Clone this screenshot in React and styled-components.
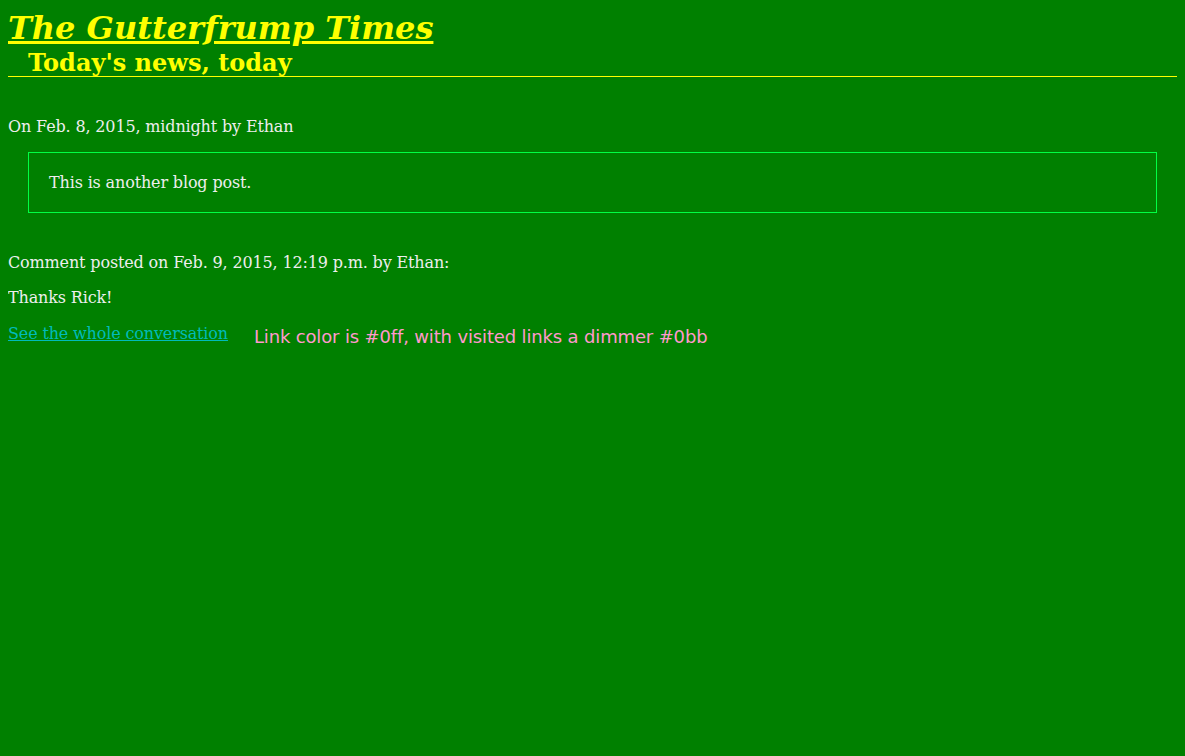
import React from 'react';
import styled, { createGlobalStyle } from 'styled-components';

const Global = createGlobalStyle`
    html, body {
        background: #008000;
    }
    body {
        margin: 8px;
        color: #eee;
        font-family: "DejaVu Serif", serif;
        font-size: 16px;
        line-height: 19px;
        letter-spacing: -0.15px;
    }
`;

const Masthead = styled.header`
    // box
    border-bottom: 1px solid #ff0;
    margin-bottom: 40px;
    letter-spacing: 0;
`;

const Title = styled.h1`
    // font
    color: #ff0;
    font-size: 32px;
    line-height: 38px;
    font-style: italic;
    font-weight: bold;
    // box
    margin: 0;
    padding-top: 1px;
    a {
        color: #ff0;
        text-decoration: underline;
    }
`;

const Tagline = styled.h2`
    // font
    color: #ff0;
    font-size: 24px;
    line-height: 27px;
    font-weight: bold;
    // box
    margin: 0;
    padding: 2px 0 0 20px;
`;

const Line = styled.p`
    margin: 16px 0;
`;

const PostBody = styled.div`
    // box
    margin: 0 20px;
    padding: 20px;
    border: 1px solid #0f4;
`;

const Comments = styled.section`
    margin-top: 40px;
`;

const Link = styled.a`
    color: #0bb;
    text-decoration: underline;
`;

const Note = styled.span`
    // font
    color: #f9c;
    font-family: "DejaVu Sans", sans-serif;
    font-size: 18px;
    // box
    display: inline-block;
    margin-left: 21px;
    position: relative;
    top: 4px;
`;

const App = () => (
    <>
        <Global />
        <Masthead>
            <Title><a href="#">The Gutterfrump Times</a></Title>
            <Tagline>Today's news, today</Tagline>
        </Masthead>
        <article>
            <Line>On Feb. 8, 2015, midnight by Ethan</Line>
            <PostBody>This is another blog post.</PostBody>
        </article>
        <Comments>
            <Line>Comment posted on Feb. 9, 2015, 12:19 p.m. by Ethan:</Line>
            <Line>Thanks Rick!</Line>
            <Line>
                <Link href="#">See the whole conversation</Link>{' '}
                <Note>Link color is #0ff, with visited links a dimmer #0bb</Note>
            </Line>
        </Comments>
    </>
);

export default App;
